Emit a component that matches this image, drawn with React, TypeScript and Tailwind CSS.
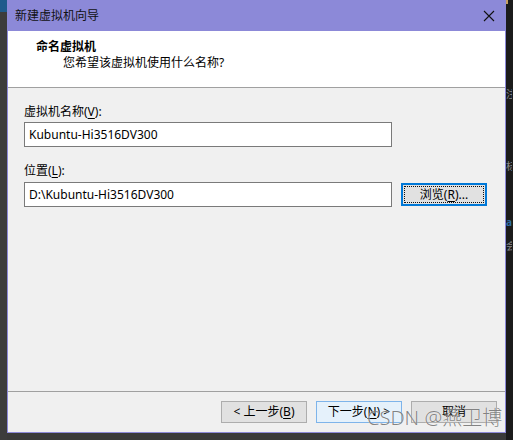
import React from "react";

const font = { fontFamily: '"Segoe UI", "Noto Sans", "Noto Sans CJK SC", sans-serif' };

function U({ c }: { c: string }) {
  return <span className="underline underline-offset-2">{c}</span>;
}

export default function App() {
  return (
    <div
      className="relative w-[513px] h-[440px] bg-[#3a3a3a] flex text-[12px] text-[#000] overflow-hidden"
      style={font}
    >
      {/* left strip */}
      <div className="w-[7px] flex flex-col">
        <div className="h-[12px] bg-[#1d5a8c]" />
        <div className="flex-1 bg-[#3c3c3c]" />
      </div>

      {/* dialog */}
      <div className="w-[499px] h-[433px] flex flex-col border-l border-r border-b border-[#8c89d8] bg-[#f0f0f0]">
        {/* title bar */}
        <div className="h-[31px] bg-[#8c89d8] flex items-center pl-[7px] pr-[10px] justify-between">
          <span className="text-[12px] text-[#111]">新建虚拟机向导</span>
          <svg width="12" height="12" viewBox="0 0 12 12">
            <path d="M1 1 L11 11 M11 1 L1 11" stroke="#111" strokeWidth="1.1" />
          </svg>
        </div>

        {/* header */}
        <div className="h-[57px] bg-white border-b border-[#a0a0a0] flex flex-col pl-[28px] pt-[7px]">
          <div className="font-bold leading-[18px] text-[12px]">命名虚拟机</div>
          <div className="pl-[27px] leading-[16px] mt-[-1px]">您希望该虚拟机使用什么名称?</div>
        </div>

        {/* body */}
        <div className="h-[304px] border-b border-[#a0a0a0] flex flex-col pl-[16px] pt-[16px]">
          <div className="leading-[16px]">
            虚拟机名称(<U c="V" />):
          </div>
          <div className="mt-[2px] w-[368px] h-[25px] bg-white border border-[#7a7a7a] flex items-center pl-[4px]">
            Kubuntu-Hi3516DV300
          </div>
          <div className="mt-[16px] leading-[16px]">
            位置(<U c="L" />):
          </div>
          <div className="mt-[3px] flex items-center gap-[9px]">
            <div className="w-[368px] h-[25px] bg-white border border-[#7a7a7a] flex items-center pl-[4px]">
              D:\Kubuntu-Hi3516DV300
            </div>
            <div className="w-[86px] h-[23px] border-2 border-[#0078d7] bg-[#e1e1e1] p-[1px]">
              <div className="w-full h-full border border-dotted border-[#111] flex items-center justify-center">
                浏览(<U c="R" />)...
              </div>
            </div>
          </div>
        </div>

        {/* footer */}
        <div className="flex-1 flex justify-end items-start pt-[9px] pr-[8px] gap-[9px]">
          <div className="w-[86px] h-[22px] bg-[#e1e1e1] border border-[#adadad] flex items-center justify-center">
            &lt; 上一步(<U c="B" />)
          </div>
          <div className="w-[86px] h-[22px] bg-[#e5f1fb] border border-[#7eb4ea] flex items-center justify-center">
            下一步(<U c="N" />) &gt;
          </div>
          <div className="w-[86px] h-[22px] bg-[#e1e1e1] border border-[#adadad] flex items-center justify-center">
            取消
          </div>
        </div>
      </div>

      {/* right strip */}
      <div className="flex-1 bg-[#1b1b1b] flex flex-col items-start text-[#8a8a8a] text-[10px] leading-[12px] overflow-hidden">
        <div className="h-[4px] bg-[#c8a060] w-[2px]" />
        <div className="mt-[84px] w-[6px] overflow-hidden">注</div>
        <div className="mt-[60px] w-[6px] overflow-hidden">标</div>
        <div className="mt-[44px] w-[6px] overflow-hidden text-[#2e6da4] font-bold">a</div>
        <div className="mt-[12px] w-[6px] overflow-hidden">会</div>
      </div>

      {/* watermark */}
      <div
        className="absolute left-[367px] top-[406px] text-[20px] leading-[24px] font-light text-[rgba(85,85,85,0.72)]"
        style={{ textShadow: "0 0 1px rgba(255,255,255,0.9)" }}
      >
        CSDN @燕卫博
      </div>
    </div>
  );
}
